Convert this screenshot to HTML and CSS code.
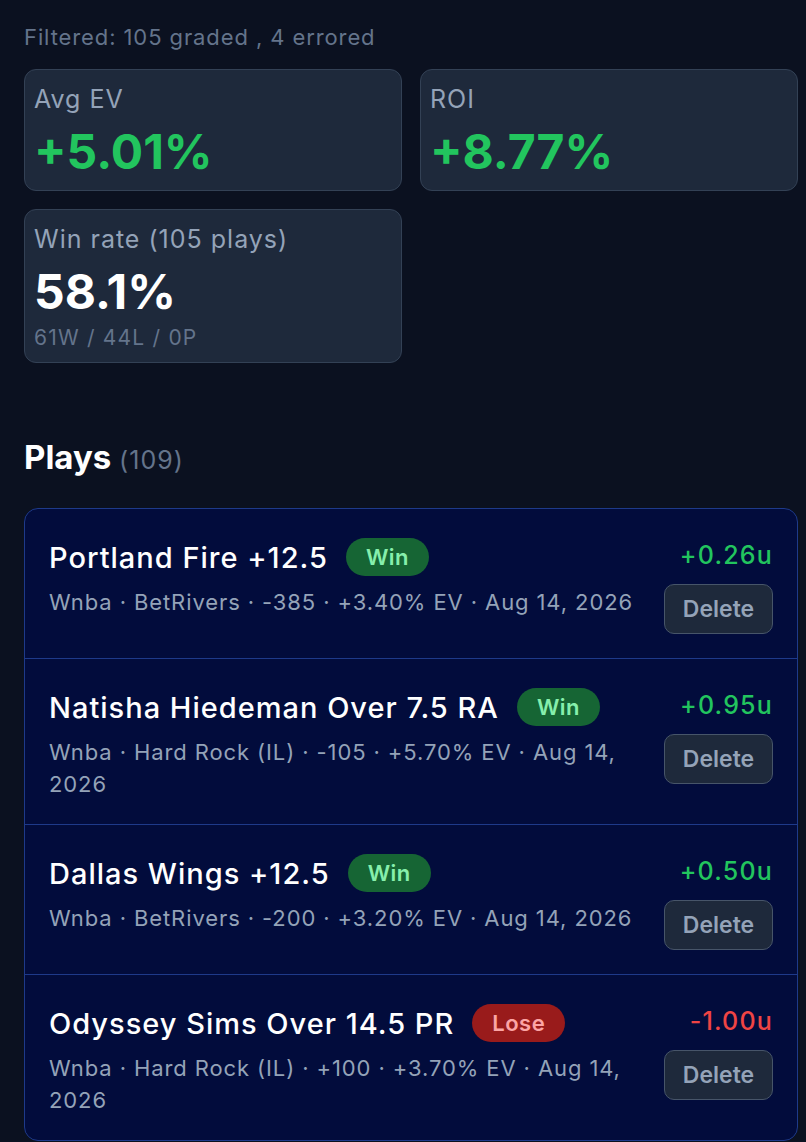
FILE: index.html
```html
<!DOCTYPE html>
<html lang="en">
<head>
<meta charset="utf-8">
<title>Plays</title>
<link rel="stylesheet" href="styles.css">
</head>
<body>
<main class="page">
  <p class="filtered">Filtered: 105 graded , 4 errored</p>

  <section class="stats">
    <div class="stat">
      <div class="stat-label">Avg EV</div>
      <div class="stat-value pos">+5.01%</div>
    </div>
    <div class="stat">
      <div class="stat-label">ROI</div>
      <div class="stat-value pos">+8.77%</div>
    </div>
    <div class="stat">
      <div class="stat-label">Win rate (105 plays)</div>
      <div class="stat-value">58.1%</div>
      <div class="stat-sub">61W / 44L / 0P</div>
    </div>
  </section>

  <h2 class="plays-title">Plays <span class="count">(109)</span></h2>

  <section class="plays">
    <div class="play">
      <div class="play-main">
        <div class="play-head">
          <span class="play-name">Portland Fire +12.5</span>
          <span class="badge win">Win</span>
        </div>
        <div class="play-meta">Wnba · BetRivers · -385 · +3.40% EV · Aug 14, 2026</div>
      </div>
      <div class="play-side">
        <div class="amount pos">+0.26u</div>
        <button class="delete">Delete</button>
      </div>
    </div>

    <div class="play">
      <div class="play-main">
        <div class="play-head">
          <span class="play-name">Natisha Hiedeman Over 7.5 RA</span>
          <span class="badge win">Win</span>
        </div>
        <div class="play-meta">Wnba · Hard Rock (IL) · -105 · +5.70% EV · Aug 14, 2026</div>
      </div>
      <div class="play-side">
        <div class="amount pos">+0.95u</div>
        <button class="delete">Delete</button>
      </div>
    </div>

    <div class="play">
      <div class="play-main">
        <div class="play-head">
          <span class="play-name">Dallas Wings +12.5</span>
          <span class="badge win">Win</span>
        </div>
        <div class="play-meta">Wnba · BetRivers · -200 · +3.20% EV · Aug 14, 2026</div>
      </div>
      <div class="play-side">
        <div class="amount pos">+0.50u</div>
        <button class="delete">Delete</button>
      </div>
    </div>

    <div class="play">
      <div class="play-main">
        <div class="play-head">
          <span class="play-name">Odyssey Sims Over 14.5 PR</span>
          <span class="badge lose">Lose</span>
        </div>
        <div class="play-meta">Wnba · Hard Rock (IL) · +100 · +3.70% EV · Aug 14, 2026</div>
      </div>
      <div class="play-side">
        <div class="amount neg">-1.00u</div>
        <button class="delete">Delete</button>
      </div>
    </div>
  </section>
</main>
</body>
</html>
```

FILE: styles.css
```css
* { box-sizing: border-box; }

html, body {
  margin: 0;
  padding: 0;
  background: #0b1120;
}

body {
  font-family: Inter, "Noto Sans", "Liberation Sans", sans-serif;
  color: #f8fafc;
  height: 1142px;
  overflow: hidden;
}

.page {
  width: 774px;
  margin-left: 24px;
  padding-top: 22px;
}

.filtered {
  margin: 0;
  font-size: 22px;
  line-height: 30px;
  letter-spacing: 0.9px;
  color: #64748b;
}

.stats {
  margin-top: 17px;
  display: grid;
  grid-template-columns: 378px 378px;
  column-gap: 18px;
  row-gap: 18px;
  align-items: start;
}

.stat {
  background: #1e293b;
  border: 1.5px solid #334155;
  border-radius: 12px;
  padding: 13px 9px 11px;
}

.stat-label {
  font-size: 25px;
  line-height: 32px;
  letter-spacing: 1px;
  color: #94a3b8;
}

.stat-value {
  margin-top: 10px;
  font-size: 48px;
  line-height: 54px;
  font-weight: 700;
  color: #ffffff;
}

.stat-value.pos { color: #22c55e; }

.stat-sub {
  margin-top: 6px;
  font-size: 21px;
  line-height: 26px;
  letter-spacing: 1.2px;
  color: #64748b;
}

.plays-title {
  margin: 74px 0 0;
  font-size: 33px;
  line-height: 40px;
  font-weight: 700;
  color: #ffffff;
}

.plays-title .count {
  font-size: 25px;
  font-weight: 400;
  letter-spacing: 1px;
  color: #64748b;
}

.plays {
  margin-top: 28px;
  background: #020c3c;
  border: 1.5px solid #1e3a8a;
  border-radius: 14px;
  overflow: hidden;
}

.play {
  display: flex;
  align-items: flex-start;
  gap: 24px;
  padding: 26px 24px 24px 24px;
  border-top: 1.5px solid #1e3a8a;
}

.play:first-child { border-top: none; }

.play-main {
  flex: 1;
  min-width: 0;
}

.play-head {
  display: flex;
  align-items: center;
  gap: 18px;
  height: 44px;
}

.play-name {
  font-size: 29px;
  font-weight: 500;
  letter-spacing: 1px;
  color: #ffffff;
}

.badge {
  display: inline-flex;
  align-items: center;
  height: 38px;
  padding: 0 20px;
  border-radius: 19px;
  font-size: 22px;
  font-weight: 600;
  letter-spacing: 0.5px;
}

.badge.win {
  background: #166534;
  color: #86efac;
}

.badge.lose {
  background: #991b1b;
  color: #fca5a5;
}

.play-meta {
  margin-top: 7px;
  font-size: 22px;
  line-height: 32px;
  letter-spacing: 0.9px;
  color: #94a3b8;
}

.play-side {
  display: flex;
  flex-direction: column;
  align-items: flex-end;
  gap: 8px;
}

.amount {
  font-size: 25px;
  line-height: 41px;
  font-weight: 500;
  letter-spacing: 1.2px;
}

.amount.pos { color: #22c55e; }
.amount.neg { color: #ef4444; }

.delete {
  width: 109px;
  height: 50px;
  background: #1e293b;
  border: 1.5px solid #475569;
  border-radius: 10px;
  color: #94a3b8;
  font-family: inherit;
  font-size: 23px;
  font-weight: 600;
  padding: 0;
}
```
